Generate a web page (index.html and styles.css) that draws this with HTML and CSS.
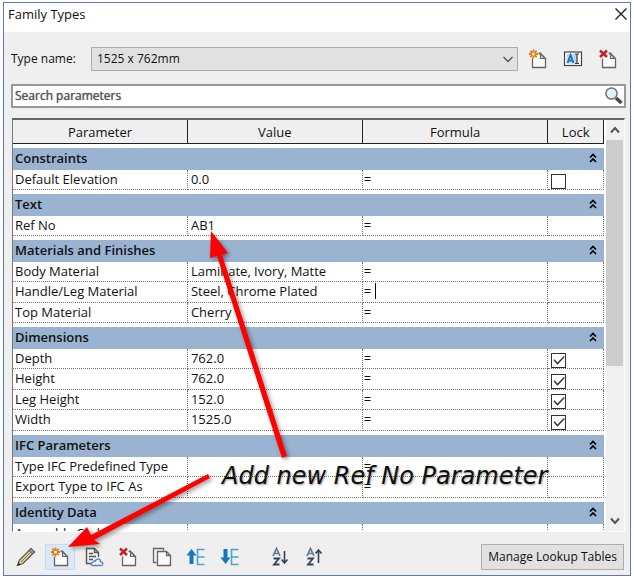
FILE: index.html
```html
<!DOCTYPE html>
<html lang="en">
<head>
<meta charset="utf-8">
<title>Family Types</title>
<link rel="stylesheet" href="styles.css">
</head>
<body>
<svg class="defs" width="0" height="0" aria-hidden="true">
  <symbol id="page" viewBox="0 0 20 20">
    <path d="M10.5 4.500H12.500L17.500 9.500V18.500H4.500V9.500" fill="#fafafa" stroke="#666" stroke-width="1.300"/>
    <path d="M11.500 3.500L17 9.500H12.500V5" fill="#ddd" stroke="#666" stroke-width="1.200"/>
  </symbol>
  <symbol id="new" viewBox="0 0 20 20">
    <use href="#page"/>
    <g stroke="#e87817" stroke-width="1.800"><path d="M5.500 0.500V9.500M1 5H10M2.300 1.800L8.700 8.200M8.700 1.800L2.300 8.200"/></g>
    <circle cx="5.500" cy="5" r="1.600" fill="#fff3c4"/>
  </symbol>
  <symbol id="delete" viewBox="0 0 20 20">
    <use href="#page"/>
    <path d="M2 1.500L9 8M9 1.500L2 8" stroke="#c81e2b" stroke-width="2.400"/>
  </symbol>
  <symbol id="collapse" viewBox="0 0 8 10">
    <path d="M1 4.500L4 1.500L7 4.500M1 9L4 6L7 9" fill="none" stroke="#000" stroke-width="1.700"/>
  </symbol>
  <symbol id="letters" viewBox="0 0 20 20">
    <path d="M2 9L5.500 1.500L9 9M3.300 6.500H7.700" fill="none" stroke="#5f7896" stroke-width="1.700"/>
    <path d="M2.500 11.500H8L3 17.500H8.500" fill="none" stroke="#33415f" stroke-width="1.800"/>
  </symbol>
  <symbol id="tree" viewBox="0 0 20 20">
    <path d="M18.500 2.500H11.500V17.500H18.500M11.500 10H18.500" fill="none" stroke="#4aa3d8" stroke-width="1.600"/>
  </symbol>
</svg>

<main class="dialog">
  <header class="titlebar">
    <h1>Family Types</h1>
    <button class="close" aria-label="Close"><svg width="14" height="14" viewBox="0 0 14 14"><path d="M1.500 1.500L12.500 12.500M12.500 1.500L1.500 12.500" stroke="#222" stroke-width="1.400"/></svg></button>
  </header>

  <div class="content">
    <div class="type-row">
      <label for="type">Type name:</label>
      <div class="select">
        <select id="type"><option>1525 x 762mm</option></select>
        <svg width="10" height="7" viewBox="0 0 10 7"><path d="M0.500 1L5 5.500L9.500 1" fill="none" stroke="#555" stroke-width="1.300"/></svg>
      </div>
      <div class="type-actions">
        <button class="tool" aria-label="New type"><svg width="20" height="20"><use href="#new"/></svg></button>
        <button class="tool" aria-label="Rename type"><svg width="20" height="20" viewBox="0 0 20 20"><rect x="1.500" y="3" width="17" height="13.500" fill="#fff" stroke="#444" stroke-width="1.200"/><rect x="3.500" y="5" width="10" height="9.500" fill="#b5dcf4"/><path d="M4.500 14L7.500 6L10.500 14M5.500 11.500H9.500" fill="none" stroke="#2377b5" stroke-width="1.900"/><path d="M12 5H16M14 5V14.500M12 14.500H16" stroke="#333" stroke-width="1.200"/></svg></button>
        <button class="tool" aria-label="Delete type"><svg width="20" height="20"><use href="#delete"/></svg></button>
      </div>
    </div>

    <div class="search">
      <input type="text" placeholder="Search parameters" aria-label="Search parameters">
      <button aria-label="Search"><svg width="20" height="20" viewBox="0 0 20 20"><path d="M12 12L17.500 17" stroke="#4a4a4a" stroke-width="3.600"/><circle cx="7.500" cy="7.500" r="5.600" fill="#e2eff5" stroke="#6b7276" stroke-width="1.500"/><path d="M4.500 7Q5 4.500 7.500 4.500" fill="none" stroke="#fff" stroke-width="1.500"/></svg></button>
    </div>

    <div class="pane">
      <div class="viewport">
        <table>
          <colgroup><col class="c-param"><col class="c-value"><col class="c-formula"><col class="c-lock"></colgroup>
          <thead><tr><th>Parameter</th><th>Value</th><th>Formula</th><th>Lock</th></tr></thead>
          <tbody>
            <tr class="group"><th colspan="4"><div><span>Constraints</span><button aria-label="Collapse Constraints"><svg width="8" height="10"><use href="#collapse"/></svg></button></div></th></tr>
            <tr><td>Default Elevation</td><td>0.0</td><td>=</td><td><input type="checkbox" aria-label="Lock Default Elevation"></td></tr>
          </tbody>
          <tbody>
            <tr class="group"><th colspan="4"><div><span>Text</span><button aria-label="Collapse Text"><svg width="8" height="10"><use href="#collapse"/></svg></button></div></th></tr>
            <tr><td>Ref No</td><td>AB1</td><td>=</td><td></td></tr>
          </tbody>
          <tbody>
            <tr class="group"><th colspan="4"><div><span>Materials and Finishes</span><button aria-label="Collapse Materials and Finishes"><svg width="8" height="10"><use href="#collapse"/></svg></button></div></th></tr>
            <tr><td>Body Material</td><td>Laminate, Ivory, Matte</td><td>=</td><td></td></tr>
            <tr><td>Handle/Leg Material</td><td>Steel, Chrome Plated</td><td>=<span class="caret"></span></td><td></td></tr>
            <tr><td>Top Material</td><td>Cherry</td><td>=</td><td></td></tr>
          </tbody>
          <tbody>
            <tr class="group"><th colspan="4"><div><span>Dimensions</span><button aria-label="Collapse Dimensions"><svg width="8" height="10"><use href="#collapse"/></svg></button></div></th></tr>
            <tr><td>Depth</td><td>762.0</td><td>=</td><td><input type="checkbox" checked aria-label="Lock Depth"></td></tr>
            <tr><td>Height</td><td>762.0</td><td>=</td><td><input type="checkbox" checked aria-label="Lock Height"></td></tr>
            <tr><td>Leg Height</td><td>152.0</td><td>=</td><td><input type="checkbox" checked aria-label="Lock Leg Height"></td></tr>
            <tr><td>Width</td><td>1525.0</td><td>=</td><td><input type="checkbox" checked aria-label="Lock Width"></td></tr>
          </tbody>
          <tbody>
            <tr class="group"><th colspan="4"><div><span>IFC Parameters</span><button aria-label="Collapse IFC Parameters"><svg width="8" height="10"><use href="#collapse"/></svg></button></div></th></tr>
            <tr><td>Type IFC Predefined Type</td><td></td><td>=</td><td></td></tr>
            <tr><td>Export Type to IFC As</td><td></td><td>=</td><td></td></tr>
          </tbody>
          <tbody>
            <tr class="group"><th colspan="4"><div><span>Identity Data</span><button aria-label="Collapse Identity Data"><svg width="8" height="10"><use href="#collapse"/></svg></button></div></th></tr>
            <tr><td>Assembly Code</td><td></td><td></td><td></td></tr>
          </tbody>
        </table>
      </div>
      <div class="scrollbar">
        <button aria-label="Scroll up"><svg width="10" height="8" viewBox="0 0 10 8"><path d="M1 6.500L5 2L9 6.500" fill="none" stroke="#555" stroke-width="2"/></svg></button>
        <div class="track"><div class="thumb"></div></div>
        <button aria-label="Scroll down"><svg width="10" height="8" viewBox="0 0 10 8"><path d="M1 1.500L5 6L9 1.500" fill="none" stroke="#555" stroke-width="2"/></svg></button>
      </div>
    </div>

    <footer class="toolbar">
      <div class="tools">
        <button class="tool" aria-label="Edit parameter"><svg width="20" height="20" viewBox="0 0 20 20"><path d="M1.500 18.500L3.500 13L15 1.500L18.500 5L7 16.500Z" fill="#e2cd96" stroke="#555" stroke-width="1.200"/><path d="M13 3.500L15 1.500L18.500 5L16.500 7Z" fill="#999" stroke="#555"/><path d="M5 15L15 5" stroke="#8c7440"/><path d="M1.500 18.500L2.500 15.500L4.500 17.500Z" fill="#222"/></svg></button>
        <button class="tool active" aria-label="New parameter"><svg width="20" height="20"><use href="#new"/></svg></button>
        <button class="tool" aria-label="New global parameter"><svg width="20" height="20" viewBox="0 0 20 20"><path d="M7 16.500H2.500V1.500H10.500L14.500 5.500V10M10.500 1.500V5.500H14.500" fill="none" stroke="#555" stroke-width="1.400"/><path d="M5 6.500H9M5 9.500H12M5 12.500H9" stroke="#555" stroke-width="1.400"/><path d="M9 18.500C6.500 18.500 6.500 15.500 9 15.300C9.500 13.500 11 13.500 11.500 14C12.500 10.500 17 11.500 16.500 14.800C19.500 14.800 19.500 18.500 17 18.500Z" fill="#edf4fc" stroke="#577fb8" stroke-width="1.300"/></svg></button>
        <button class="tool" aria-label="Delete parameter"><svg width="20" height="20"><use href="#delete"/></svg></button>
        <button class="tool" aria-label="Duplicate parameter"><svg width="20" height="20" viewBox="0 0 20 20"><path d="M4.500 15.500H1.500V1.500H11.500V3.500" fill="none" stroke="#666" stroke-width="1.300"/><path d="M5.500 4.500H14.500L18.500 8.500V18.500H5.500ZM14.500 4.500V8.500H18.500" fill="#fafafa" stroke="#666" stroke-width="1.300"/></svg></button>
        <button class="tool" aria-label="Move up"><svg width="20" height="20" viewBox="0 0 20 20"><use href="#tree"/><path d="M5.500 2L10.500 8.500H7.500V17H3.500V8.500H0.500Z" fill="#1678b8"/></svg></button>
        <button class="tool" aria-label="Move down"><svg width="20" height="20" viewBox="0 0 20 20"><use href="#tree"/><path d="M5.500 17L0.500 10.500H3.500V2H7.500V10.500H10.500Z" fill="#1678b8"/></svg></button>
      </div>
      <div class="tools">
        <button class="tool" aria-label="Sort ascending"><svg width="20" height="20" viewBox="0 0 20 20"><use href="#letters"/><path d="M13.500 4V16M10.500 12.500L13.500 16L16.500 12.500" fill="none" stroke="#33415f" stroke-width="1.600"/></svg></button>
        <button class="tool" aria-label="Sort descending"><svg width="20" height="20" viewBox="0 0 20 20"><use href="#letters"/><path d="M13.500 16V3M10.500 6.500L13.500 3L16.500 6.500" fill="none" stroke="#33415f" stroke-width="1.600"/></svg></button>
      </div>
      <button class="lookup">Manage Lookup Tables</button>
    </footer>
  </div>
</main>

<div class="annotation">
  <svg width="634" height="580" viewBox="0 0 634 580" aria-hidden="true">
    <g fill="#f00">
      <path d="M211 231L228 253L222 255L287 456L282 458L217 256L210 258Z"/>
      <path d="M68 547L87 527L91 535L208 474L210 478L94 540L100 544Z"/>
    </g>
  </svg>
  <p>Add new Ref No Parameter</p>
</div>
</body>
</html>
```
FILE: styles.css
```css
* {
  box-sizing: border-box;
}

body {
  margin: 0;
  height: 100vh;
  padding: 2px 3px 4px;
  background: #fff;
  color: #111;
  font: 13px/20px "Segoe UI", "Open Sans", sans-serif;
  position: relative;
  overflow: hidden;
}

button,
input,
select {
  font: inherit;
  color: inherit;
  margin: 0;
}

button {
  display: flex;
  align-items: center;
  justify-content: center;
  padding: 0;
  border: 0;
  background: none;
}

.defs {
  position: absolute;
}

.dialog {
  display: flex;
  flex-direction: column;
  height: 100%;
  border: 1px solid #5b78c0;
  background: #efefef;
}

.titlebar {
  display: flex;
  justify-content: space-between;
  height: 29px;
  padding: 0 2px 0 4px;
  background: #fff;
}

.titlebar h1 {
  margin: 0;
  font-size: 13px;
  font-weight: 400;
  line-height: 22px;
}

.close {
  height: 21px;
}

.content {
  flex: 1;
  min-height: 0;
  display: flex;
  flex-direction: column;
  padding: 15px 4px 5px 7px;
}

.type-row {
  display: flex;
  align-items: center;
  height: 24px;
  font-size: 12px;
}

.type-row label {
  width: 80px;
}

.select {
  position: relative;
  flex: 1;
}

.select select {
  display: block;
  appearance: none;
  width: 100%;
  height: 24px;
  padding: 0 5px;
  border: 1px solid #adadad;
  border-radius: 0;
  background: #e1e1e1;
}

.select svg {
  position: absolute;
  right: 5px;
  top: 9px;
}

.type-actions {
  display: flex;
  gap: 5px;
  padding: 0 3px 0 5px;
}

.tool {
  width: 30px;
  height: 26px;
}

.search {
  display: flex;
  height: 24px;
  margin: 13px 0 10px;
  border: 2px solid #999;
  background: #fff;
}

.search input {
  flex: 1;
  min-width: 0;
  padding: 0 2px;
  border: 0;
  background: none;
  font-size: 12px;
}

.search input::placeholder {
  color: #555;
  opacity: 1;
  text-shadow: 0 0 1px #555;
}

.pane {
  flex: 1;
  min-height: 0;
  display: flex;
  margin: 0 1px;
  border: 1px solid #777;
  border-top: 2px solid #666;
  border-right-color: #fff;
  border-bottom-color: #fff;
  background: #fff;
}

.viewport {
  flex: 1;
  overflow: hidden;
}

table {
  width: 100%;
  table-layout: fixed;
  border-collapse: separate;
  border-spacing: 0;
}

.c-param,
.c-value {
  width: 29.6%;
}

.c-formula {
  width: 31.4%;
}

.c-lock {
  width: 9.4%;
}

th,
td {
  height: 20px;
  padding: 0 0 2px 2px;
  line-height: 16px;
  text-align: left;
  white-space: nowrap;
}

thead th {
  height: 24px;
  padding: 0;
  border-right: 1px solid #222;
  border-bottom: 1px solid #222;
  background: #efefef;
  font-weight: 400;
  text-align: center;
}

.group th {
  height: 26px;
  padding: 0 7px 2px 2px;
  border-top: 4px solid #fff;
  background: #9ab3d0;
  background-clip: padding-box;
  font-weight: 600;
}

.group th div {
  display: flex;
  align-items: center;
  justify-content: space-between;
}

.group button {
  height: 16px;
}

td {
  border-right: 1px dotted #777;
  border-bottom: 1px dotted #777;
}

tbody tr:nth-child(odd) td {
  height: 21px;
}

td + td {
  padding-left: 3px;
}

td:nth-child(3) {
  padding-left: 1px;
}

td:last-child {
  padding-bottom: 0;
  vertical-align: bottom;
}

.caret {
  display: inline-block;
  height: 16px;
  margin-left: 4px;
  border-left: 1px solid #000;
  vertical-align: top;
}

input[type="checkbox"] {
  appearance: none;
  display: block;
  width: 15px;
  height: 15px;
  border: 1px solid #333;
  background: #fff;
}

input[type="checkbox"]:checked::before {
  content: "";
  display: block;
  height: 13px;
  background: #333;
  clip-path: polygon(8% 48%, 16% 41%, 39% 66%, 88% 16%, 95% 24%, 39% 82%);
}

.scrollbar {
  display: flex;
  flex-direction: column;
  width: 18px;
  margin-left: 2px;
  background: #f0f0f0;
}

.scrollbar button {
  height: 20px;
}

.track {
  flex: 1;
}

.thumb {
  width: 17px;
  height: 61%;
  background: #cdcdcd;
}

.toolbar {
  display: flex;
  align-items: center;
  gap: 21px;
  padding-top: 12px;
}

.tools {
  display: flex;
  gap: 4px;
}

.active {
  border: 1px solid #c5dcf0;
  background: #dce9f5;
}

.lookup {
  height: 26px;
  margin-left: auto;
  margin-right: 2px;
  padding: 0 6px;
  border: 1px solid #adadad;
  background: #e1e1e1;
  font-size: 12px;
}

.annotation {
  position: absolute;
  inset: 0;
  pointer-events: none;
}

.annotation svg {
  display: block;
  filter: drop-shadow(2px 2px 2px rgba(0, 0, 0, 0.4));
}

.annotation p {
  position: absolute;
  left: 222px;
  top: 462px;
  margin: 0;
  color: #111;
  font: italic 24px/28px "Segoe Print", "DejaVu Sans", sans-serif;
  white-space: nowrap;
  text-shadow: 1px 1px 2px rgba(0, 0, 0, 0.4);
}
```
